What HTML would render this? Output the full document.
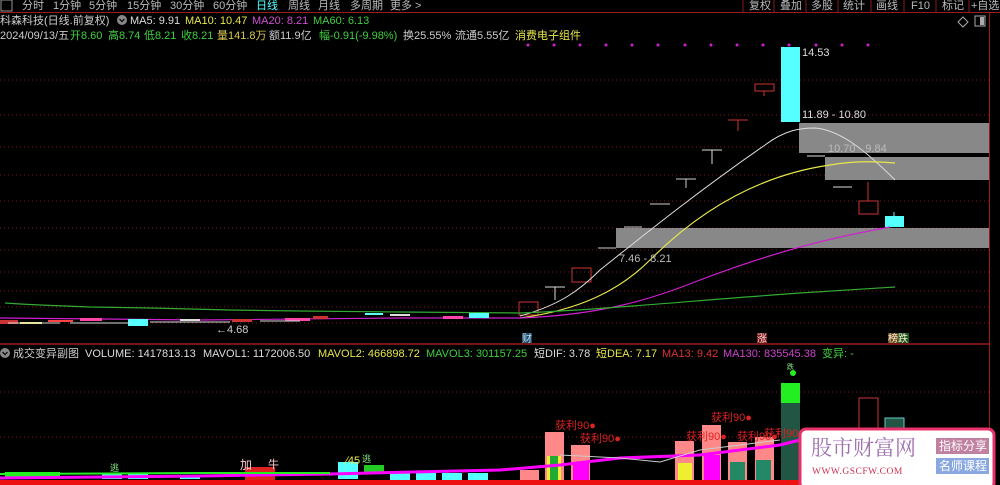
<!DOCTYPE html>
<html><head><meta charset="utf-8"><style>
html,body{margin:0;padding:0;background:#000;width:1000px;height:485px;overflow:hidden}
svg{display:block;font-family:"Liberation Sans","Noto Sans CJK SC",sans-serif}
</style></head><body>
<svg width="1000" height="485" viewBox="0 0 1000 485" xmlns="http://www.w3.org/2000/svg">
<rect width="1000" height="485" fill="#000"/>
<g font-size="11" fill="#bbb">
<rect x="1" y="0" width="11" height="11" fill="none" stroke="#999"/>
<text x="22" y="9">分时</text><text x="53" y="9">1分钟</text><text x="89" y="9">5分钟</text><text x="127" y="9">15分钟</text><text x="170" y="9">30分钟</text><text x="213" y="9">60分钟</text>
<text x="256" y="9" fill="#5ff">日线</text><text x="288" y="9">周线</text><text x="318" y="9">月线</text><text x="350" y="9">多周期</text><text x="390" y="9">更多 &gt;</text>
</g>
<g stroke="#8b1a1a" fill="none"><path d="M743 0V12M774 0V12M806 0V12M838 0V12M871 0V12M904 0V12M936 0V12M969 0V12"/></g>
<g font-size="11" fill="#bbb">
<text x="749" y="9">复权</text><text x="780" y="9">叠加</text><text x="811" y="9">多股</text><text x="843" y="9">统计</text><text x="876" y="9">画线</text><text x="911" y="9">F10</text><text x="942" y="9">标记</text><text x="971" y="9">+自选</text>
</g>
<line x1="0" y1="12.5" x2="1000" y2="12.5" stroke="#9b1b1b"/>
<line x1="989.5" y1="12" x2="989.5" y2="485" stroke="#9b1b1b"/>
<text x="0" y="24" font-size="11" fill="#ccc">科森科技(日线.前复权)</text>
<circle cx="122" cy="20" r="5" fill="#888"/><path d="M119.5 19l2.5 2.5 2.5-2.5" stroke="#000" fill="none" stroke-width="1.2"/>
<text y="24" font-size="11"><tspan x="130" fill="#ddd">MA5: 9.91</tspan><tspan x="185" fill="#e6e64c">MA10: 10.47</tspan><tspan x="252" fill="#d24cd2">MA20: 8.21</tspan><tspan x="313" fill="#3ecf3e">MA60: 6.13</tspan></text>
<text y="39" font-size="11"><tspan x="0" fill="#ccc">2024/09/13/五</tspan><tspan x="70" fill="#3ecf3e">开8.60</tspan><tspan x="108" fill="#3ecf3e">高8.74</tspan><tspan x="144" fill="#3ecf3e">低8.21</tspan><tspan x="181" fill="#3ecf3e">收8.21</tspan><tspan x="217" fill="#d8c850">量141.8万</tspan><tspan x="269" fill="#ccc">额11.9亿</tspan><tspan x="319" fill="#3ecf3e">幅-0.91(-9.98%)</tspan><tspan x="403" fill="#ccc">换25.55%</tspan><tspan x="455" fill="#ccc">流通5.55亿</tspan><tspan x="515" fill="#e6e64c">消费电子组件</tspan></text>
<path d="M958 22l5-5 5 5-5 5z" stroke="#aaa" fill="none"/>
<rect x="975" y="16" width="10" height="10" fill="none" stroke="#aaa"/><rect x="980" y="17" width="4" height="8" fill="#aaa"/>
<g fill="#d020d0">
<circle cx="528" cy="45" r="1.5"/><circle cx="554" cy="45" r="1.5"/><circle cx="580" cy="45" r="1.5"/><circle cx="606" cy="45" r="1.5"/><circle cx="632" cy="45" r="1.5"/><circle cx="658" cy="45" r="1.5"/><circle cx="685" cy="45" r="1.5"/><circle cx="711" cy="45" r="1.5"/><circle cx="737" cy="45" r="1.5"/><circle cx="763" cy="45" r="1.5"/><circle cx="789" cy="45" r="1.5"/><circle cx="816" cy="45" r="1.5"/><circle cx="842" cy="45" r="1.5"/><circle cx="868" cy="45" r="1.5"/>
</g>
<g stroke="#7a1a1a" stroke-dasharray="1 3">
<path d="M0 80H989M0 115H989M0 147H989M0 175H989M0 201H989M0 228H989M0 250H989M0 272H989M0 291H989M0 307H989M0 323H989"/>
<path d="M0 392H989M0 437H989"/>
</g>
<rect x="799" y="123" width="190" height="30" fill="#888"/>
<rect x="825" y="157" width="164" height="23" fill="#888"/>
<rect x="616" y="228" width="373" height="20" fill="#888"/>
<rect x="781" y="47" width="19" height="75" fill="#5ff"/>
<rect x="755" y="84" width="19" height="7" fill="none" stroke="#c33"/><line x1="764" y1="91" x2="764" y2="96" stroke="#c33"/>
<path d="M728 120H748M738 120V131" stroke="#c33"/>
<path d="M702 150H722M712 150V164" stroke="#ddd"/>
<path d="M676 179H696M686 179V188" stroke="#ccc"/>
<path d="M650 204H670" stroke="#ccc"/>
<path d="M624 227H642" stroke="#ccc"/>
<path d="M598 248H616" stroke="#ccc"/>
<rect x="572" y="268" width="19" height="14" fill="none" stroke="#c33"/>
<path d="M545 287H565M555 287V300" stroke="#ddd"/>
<rect x="519" y="302" width="19" height="13" fill="none" stroke="#c33"/>
<path d="M807 156H825" stroke="#ddd"/>
<path d="M833 187H852" stroke="#ddd"/>
<path d="M868 182V201" stroke="#c33"/><rect x="859" y="201" width="19" height="13" fill="none" stroke="#c33"/>
<rect x="885" y="216" width="19" height="11" fill="#5ff"/><line x1="894" y1="212" x2="894" y2="216" stroke="#5ff"/>
<path d="M520 316 C560 305 580 290 600 270 C650 230 700 190 765 145 C785 130 800 128 815 128 C840 130 865 150 895 180" stroke="#ddd" fill="none"/>
<path d="M520 318 C580 310 620 290 650 260 C700 210 760 175 830 165 C860 160 880 162 895 163" stroke="#e6e64c" fill="none" stroke-width="1.2"/>
<path d="M0 318 L200 320 L400 318 L520 318 C600 315 650 300 700 280 C780 250 830 238 890 227" stroke="#d020d0" fill="none" stroke-width="1.2"/>
<path d="M5 303 L20 304 L40 305 L90 307 L150 308 L230 310 L300 311 L400 312 L520 313 C600 310 700 300 800 293 L895 287" stroke="#3a3" fill="none" stroke-width="1.2"/>
<g>
<rect x="0" y="320" width="18" height="4" fill="#c33"/>
<rect x="20" y="322" width="22" height="2" fill="#ee6"/>
<rect x="48" y="320" width="25" height="2" fill="#f44"/>
<rect x="80" y="318" width="22" height="3" fill="#f4a"/>
<rect x="128" y="319" width="20" height="7" fill="#5ff"/>
<rect x="180" y="319" width="20" height="2" fill="#ddd"/>
<rect x="232" y="319" width="20" height="3" fill="#c33"/>
<rect x="285" y="318" width="25" height="3" fill="#f4a"/>
<rect x="313" y="316" width="15" height="3" fill="#c33"/>
<rect x="365" y="313" width="18" height="2" fill="#5ff"/>
<rect x="390" y="314" width="20" height="2" fill="#ddd"/>
<rect x="443" y="316" width="20" height="3" fill="#f4a"/>
<rect x="469" y="313" width="20" height="5" fill="#5ff"/>
<path d="M8 323H60M70 323H130M150 322H230M260 321H300" stroke="#ddd"/>
</g>
<text x="216" y="333" font-size="11" fill="#ccc">←4.68</text>
<rect x="522" y="333" width="10" height="10" fill="#1a4a6a"/><text x="522" y="342" font-size="10" fill="#cde">财</text>
<rect x="757" y="333" width="10" height="10" fill="#7a1a1a"/><text x="757" y="342" font-size="10" fill="#fdd">涨</text>
<rect x="888" y="333" width="10" height="10" fill="#6a4a1a"/><rect x="898" y="333" width="11" height="10" fill="#1a5a1a"/><text x="888" y="342" font-size="10" fill="#fed">榜跌</text>
<line x1="0" y1="344" x2="989" y2="344" stroke="#9b1b1b" stroke-width="1.5"/>
<circle cx="5" cy="353" r="5" fill="#888"/><path d="M2.5 352l2.5 2.5 2.5-2.5" stroke="#000" fill="none" stroke-width="1.2"/>
<text y="357" font-size="11"><tspan x="13" fill="#ccc">成交变异副图</tspan><tspan x="85" fill="#ddd">VOLUME: 1417813.13</tspan><tspan x="203" fill="#ddd">MAVOL1: 1172006.50</tspan><tspan x="318" fill="#e6e64c">MAVOL2: 466898.72</tspan><tspan x="426" fill="#3ecf3e">MAVOL3: 301157.25</tspan><tspan x="534" fill="#ddd">短DIF: 3.78</tspan><tspan x="596" fill="#e6e64c">短DEA: 7.17</tspan><tspan x="662" fill="#d33">MA13: 9.42</tspan><tspan x="723" fill="#c4c">MA130: 835545.38</tspan><tspan x="822" fill="#3ecf3e">变异: -</tspan></text>
<g>
<rect x="545" y="432" width="19" height="50" fill="#f88"/><rect x="571" y="445" width="19" height="37" fill="#f88"/>
<rect x="675" y="441" width="19" height="41" fill="#f88"/><rect x="702" y="425" width="19" height="57" fill="#f88"/>
<rect x="728" y="442" width="19" height="40" fill="#f88"/><rect x="755" y="437" width="19" height="45" fill="#f88"/>
<rect x="781" y="383" width="19" height="20" fill="#2e2"/><rect x="781" y="403" width="19" height="79" fill="#254"/>
<rect x="859" y="398" width="19" height="40" fill="none" stroke="#c33"/>
<rect x="885" y="418" width="19" height="12" fill="#254" stroke="#6cc"/>
<rect x="547" y="456" width="14" height="26" fill="#ee3"/><rect x="550" y="456" width="8" height="26" fill="#2a3"/>
<rect x="573" y="463" width="16" height="19" fill="#f0f"/>
<rect x="704" y="455" width="16" height="27" fill="#f0f"/>
<rect x="730" y="462" width="15" height="20" fill="#286"/>
<rect x="756" y="460" width="15" height="22" fill="#286"/>
<rect x="678" y="463" width="14" height="19" fill="#ee3"/>
<rect x="338" y="462" width="20" height="17" fill="#5ff"/><rect x="364" y="465" width="20" height="8" fill="#2c2"/>
<rect x="390" y="473" width="20" height="7" fill="#5ff"/><rect x="416" y="473" width="20" height="7" fill="#5ff"/><rect x="442" y="473" width="20" height="7" fill="#5ff"/><rect x="468" y="473" width="20" height="7" fill="#5ff"/>
<rect x="102" y="473" width="20" height="6" fill="#5ff"/><rect x="128" y="473" width="20" height="6" fill="#5ff"/><rect x="180" y="475" width="20" height="4" fill="#5ff"/>
<rect x="5" y="472" width="55" height="6" fill="#2e2"/><rect x="520" y="470" width="19" height="10" fill="#f88"/>
<rect x="245" y="467" width="30" height="13" fill="#d22"/>
</g>
<path d="M0 478 L200 476 L330 474 L500 470 L560 465 L620 458 L700 455 L780 445 L800 440" stroke="#f0f" fill="none" stroke-width="3"/>
<path d="M560 455 L620 458 L660 462 L700 450 L780 440" stroke="#ccc" fill="none"/>
<path d="M0 474 L200 473 L330 473" stroke="#2e2" fill="none" stroke-width="2"/>
<rect x="0" y="480" width="989" height="5" fill="#e11"/>
<g font-size="11" fill="#d22">
<text x="555" y="429">获利90●</text><text x="580" y="442">获利90●</text><text x="711" y="421">获利90●</text><text x="686" y="440">获利90●</text><text x="737" y="440">获利90●</text><text x="764" y="437">获利90</text>
</g>
<text x="346" y="464" font-size="11" fill="#e6e64c">∕45</text><text x="362" y="462" font-size="9" fill="#8e8">逃</text>
<text x="240" y="469" font-size="12" fill="#fcc">加</text><text x="268" y="468" font-size="11" fill="#fcc">牛</text>
<text x="110" y="471" font-size="9" fill="#8e8">逃</text>
<circle cx="793" cy="373" r="3" fill="#2e2"/><text x="787" y="369" font-size="7" fill="#8e8">跌</text>
<rect x="800" y="429" width="194" height="60" rx="6" fill="#fff" stroke="#e8306a" stroke-width="3"/>
<text x="811" y="455" font-size="21" fill="#a070b0" font-family="'Noto Serif CJK SC',serif">股市财富网</text>
<text x="812" y="474" font-size="9.5" fill="#d03050" font-family="'Liberation Serif',serif" letter-spacing="0.5">WWW.GSCFW.COM</text>
<rect x="936" y="438" width="53" height="16" fill="#c080a0"/><text x="939" y="450" font-size="12" fill="#fff">指标分享</text>
<rect x="936" y="458" width="53" height="16" fill="#8aa8e0"/><text x="939" y="470" font-size="12" fill="#fff">名师课程</text>
<g font-size="11" fill="#ddd">
<text x="802" y="56">14.53</text>
<text x="802" y="118">11.89 - 10.80</text>
<text x="828" y="152" fill="#bbb">10.70 - 9.84</text>
<text x="619" y="262" fill="#bbb">7.46 - 8.21</text>
</g>
</svg>
</body></html>
